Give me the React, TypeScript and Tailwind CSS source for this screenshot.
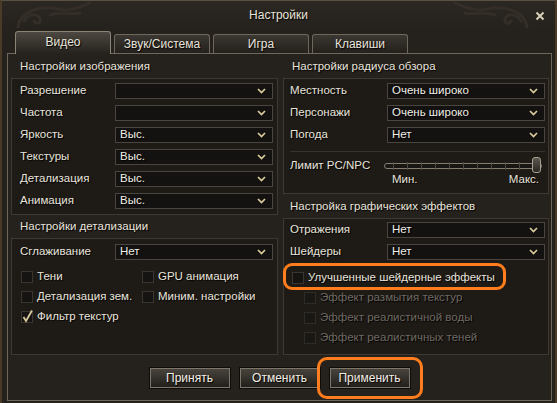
import React from 'react';

const shadow = '[text-shadow:1px_1px_1px_#000]';

function Chevron() {
  return (
    <svg width="9" height="6" viewBox="0 0 9 6" className="shrink-0">
      <path d="M1 1 L4.5 4.5 L8 1" fill="none" stroke="#dccb9c" strokeWidth="1.7" />
    </svg>
  );
}

function Select({ value }: { value?: string }) {
  return (
    <div className="flex h-[16px] flex-1 items-center justify-between border border-[#4a453e] bg-[#131210] pl-[4px] pr-[6px] text-[#f2efe8]">
      <span className={`leading-none ${shadow}`}>{value}</span>
      <Chevron />
    </div>
  );
}

function Row({ label, value, labelW }: { label: string; value?: string; labelW: string }) {
  return (
    <div className="flex h-[16px] items-center">
      <span className={`${labelW} shrink-0 leading-none ${shadow}`}>{label}</span>
      <Select value={value} />
    </div>
  );
}

function Check({ checked, dim }: { checked?: boolean; dim?: boolean }) {
  return (
    <div
      className={`relative h-[12px] w-[12px] shrink-0 border ${
        dim ? 'border-[#2e2a25] bg-[#1a1815]' : 'border-[#3a352f] bg-[#161412]'
      }`}
    >
      {checked && (
        <svg width="12" height="14" viewBox="0 0 12 14" className="absolute -top-[3px] left-0">
          <path d="M1.5 8 L4 12 L10 1.5" fill="none" stroke="#d9c99c" strokeWidth="1.8" />
        </svg>
      )}
    </div>
  );
}

function CheckItem({ label, checked, dim }: { label: string; checked?: boolean; dim?: boolean }) {
  return (
    <div className="flex h-[14px] items-center gap-[4px]">
      <Check checked={checked} dim={dim} />
      <span className={`leading-none ${dim ? 'text-[#6f6a62]' : ''} ${shadow}`}>{label}</span>
    </div>
  );
}

function SectionTitle({ children, pl }: { children: React.ReactNode; pl: string }) {
  return (
    <div className={`flex h-[24px] items-center pt-[2px] ${pl} ${shadow}`}>{children}</div>
  );
}

function Tab({ label, active }: { label: string; active?: boolean }) {
  return active ? (
    <div className="relative z-10 flex h-[23px] w-[96px] items-center justify-center rounded-t-[3px] border border-b-0 border-[#8c8476] bg-gradient-to-b from-[#4d4942] to-[#25211c] pb-[2px]">
      <span className={shadow}>{label}</span>
    </div>
  ) : (
    <div className="mb-px flex h-[19px] w-[96px] items-center justify-center rounded-t-[3px] border border-b-0 border-[#6e675c] bg-gradient-to-b from-[#3b3732] to-[#24201c]">
      <span className={shadow}>{label}</span>
    </div>
  );
}

function Button({ label }: { label: string }) {
  return (
    <div className="flex h-[20px] w-[80px] items-center justify-center border border-[#7d766a] bg-gradient-to-b from-[#48443d] to-[#221f1b] text-[#f3efe6] shadow-[0_0_0_1px_#0e0c0a]">
      <span className={shadow}>{label}</span>
    </div>
  );
}

function Swirl({ flip }: { flip?: boolean }) {
  return (
    <svg width="90" height="30" viewBox="0 0 90 30" className={flip ? '-scale-x-100' : ''}>
      <g fill="none" stroke="#332e28" strokeWidth="3" strokeLinecap="round">
        <path d="M8 26 C10 10 30 4 48 8 C60 11 70 6 80 2" />
        <path d="M14 20 C18 12 28 12 30 18 C31 22 26 24 24 20" />
        <path d="M40 14 C52 10 62 14 70 12" />
      </g>
    </svg>
  );
}

export default function App() {
  const ticks = [9, 23, 37, 51, 65, 79, 93, 107, 121, 135];
  return (
    <div className="relative h-[403px] w-[557px] overflow-hidden border-x-2 border-t border-x-[#4a3a28] border-t-[#5a5044] bg-[#25211c] font-['Liberation_Sans',Arial,sans-serif] text-[11.5px] text-[#e8e4dc]">
      {/* header */}
      <div className="relative flex h-[30px] items-center justify-center bg-gradient-to-b from-[#2b2722] to-[#25211c] pb-[2px] text-[12px]">
        <div className="absolute left-[8px] top-0">
          <Swirl />
        </div>
        <div className="absolute right-[20px] top-0">
          <Swirl flip />
        </div>
        <span className={shadow}>Настройки</span>
        <svg width="10" height="10" viewBox="0 0 10 10" className="absolute right-[10px] top-[10px]">
          <path d="M1.5 1.5 L8.5 8.5 M8.5 1.5 L1.5 8.5" stroke="#d8cfba" strokeWidth="2" />
        </svg>
      </div>

      {/* tabs */}
      <div className="-mb-px flex h-[23px] items-end gap-[3px] pl-[13px] text-[12px]">
        <Tab label="Видео" active />
        <Tab label="Звук/Система" />
        <Tab label="Игра" />
        <Tab label="Клавиши" />
      </div>

      {/* frame */}
      <div className="ml-[5px] flex h-[348px] w-[545px] flex-col border border-[#6f675b] pb-[12px] pl-[3px]">
        <div className="flex h-[301px] gap-[5px]">
          {/* left column */}
          <div className="flex w-[267px] flex-col">
            <SectionTitle pl="pl-[9px]">Настройки изображения</SectionTitle>
            <div className="flex flex-col gap-[6px] border border-[#3d3831] bg-[#1e1b17] pb-[5px] pl-[8px] pr-[4px] pt-[4px]">
              <Row label="Разрешение" labelW="w-[95px]" />
              <Row label="Частота" labelW="w-[95px]" />
              <Row label="Яркость" value="Выс." labelW="w-[95px]" />
              <Row label="Текстуры" value="Выс." labelW="w-[95px]" />
              <Row label="Детализация" value="Выс." labelW="w-[95px]" />
              <Row label="Анимация" value="Выс." labelW="w-[95px]" />
            </div>
            <div className={`flex h-[23px] items-center pl-[9px] ${shadow}`}>Настройки детализации</div>
            <div className="flex flex-1 flex-col border border-[#3d3831] bg-[#1e1b17] pl-[8px] pr-[4px] pt-[5px]">
              <Row label="Сглаживание" value="Нет" labelW="w-[95px]" />
              <div className="mt-[10px] grid grid-cols-[121px_1fr] gap-y-[6px] pl-[1px]">
                <CheckItem label="Тени" />
                <CheckItem label="GPU анимация" />
                <CheckItem label="Детализация зем." />
                <CheckItem label="Миним. настройки" />
                <CheckItem label="Фильтр текстур" checked />
              </div>
            </div>
          </div>

          {/* right column */}
          <div className="flex w-[266px] flex-col">
            <SectionTitle pl="pl-[9px]">Настройки радиуса обзора</SectionTitle>
            <div className="flex h-[116px] flex-col border border-[#3d3831] bg-[#1e1b17] pl-[6px] pr-[3px] pt-[4px]">
              <div className="flex flex-col gap-[6px]">
                <Row label="Местность" value="Очень широко" labelW="w-[97px]" />
                <Row label="Персонажи" value="Очень широко" labelW="w-[97px]" />
                <Row label="Погода" value="Нет" labelW="w-[97px]" />
              </div>
              <div className="mt-[8px] h-px bg-[#37322c]" />
              <div className="mt-[6px] flex h-[16px] items-center">
                <span className={`w-[94px] leading-none ${shadow}`}>Лимит PC/NPC</span>
                <div className="relative h-[16px] w-[158px]">
                  <div className="absolute left-0 right-0 top-[5px] h-[6px] rounded-full border border-[#857d70] bg-[#191714]" />
                  {ticks.map((t) => (
                    <div
                      key={t}
                      className="absolute top-[4px] h-[8px] w-px bg-[#4e483f]"
                      style={{ left: t }}
                    />
                  ))}
                  <div className="absolute right-[1px] top-[-1px] h-[16px] w-[9px] rounded-[3px] border border-[#a8a092] bg-gradient-to-b from-[#5d584f] to-[#2b2824]" />
                </div>
              </div>
              <div className="flex h-[12px] items-center justify-between pl-[102px] pr-[6px]">
                <span className={`leading-none ${shadow}`}>Мин.</span>
                <span className={`leading-none ${shadow}`}>Макс.</span>
              </div>
            </div>
            <div className={`flex h-[24px] items-center pl-[7px] pt-[2px] ${shadow}`}>Настройка графических эффектов</div>
            <div className="flex flex-1 flex-col border border-[#3d3831] bg-[#1e1b17] pl-[6px] pr-[3px] pt-[3px]">
              <div className="flex flex-col gap-[6px]">
                <Row label="Отражения" value="Нет" labelW="w-[97px]" />
                <Row label="Шейдеры" value="Нет" labelW="w-[97px]" />
              </div>
              <div className="mt-[11px] flex flex-col gap-[6px] pl-[2px]">
                <CheckItem label="Улучшенные шейдерные эффекты" />
                <div className="flex flex-col gap-[6px] pl-[12px]">
                  <CheckItem label="Эффект размытия текстур" dim />
                  <CheckItem label="Эффект реалистичной воды" dim />
                  <CheckItem label="Эффект реалистичных теней" dim />
                </div>
              </div>
            </div>
          </div>
        </div>

        {/* buttons */}
        <div className="mt-[13px] flex justify-center gap-[10px] pr-[3px] text-[12px]">
          <Button label="Принять" />
          <Button label="Отменить" />
          <Button label="Применить" />
        </div>
      </div>

      {/* annotation highlights */}
      <div className="pointer-events-none absolute left-[281px] top-[262px] h-[27px] w-[223px] rounded-[9px] border-[3px] border-[#ff7d1c]" />
      <div className="pointer-events-none absolute left-[315px] top-[356px] h-[42px] w-[106px] rounded-[10px] border-[3px] border-[#ff7d1c]" />
    </div>
  );
}
